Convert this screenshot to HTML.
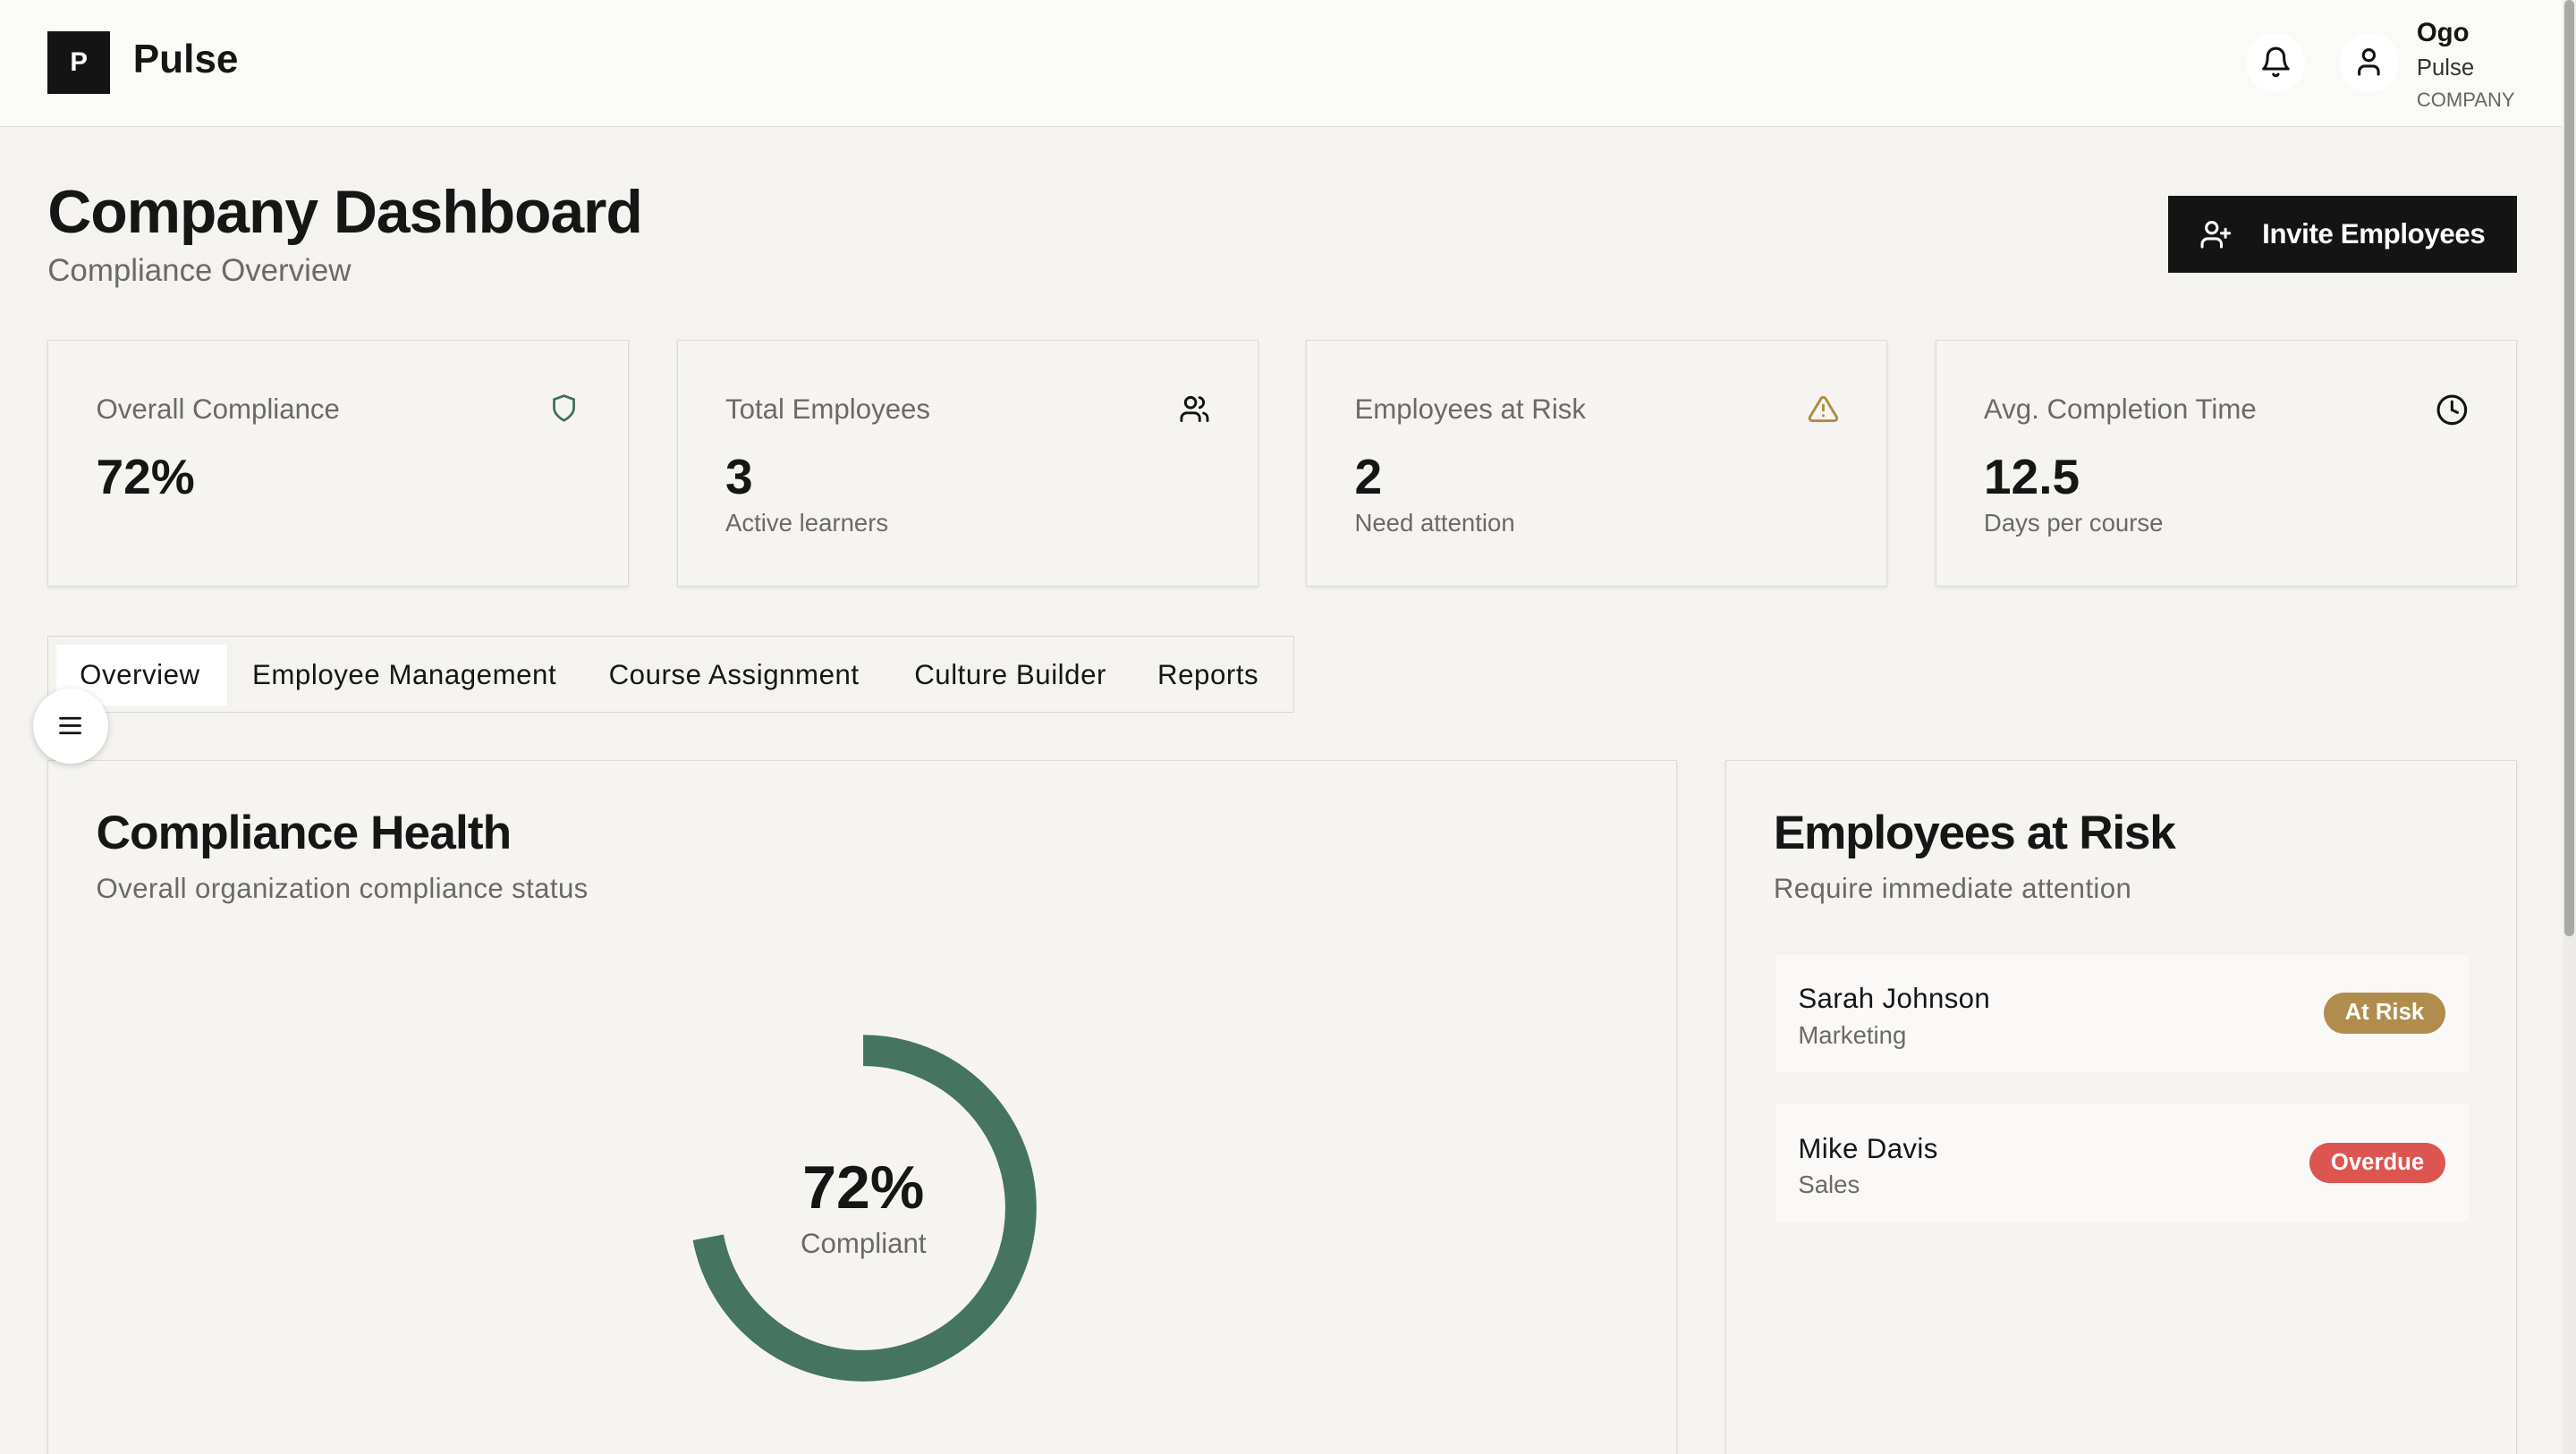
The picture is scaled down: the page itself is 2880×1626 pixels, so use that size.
<!DOCTYPE html>
<html><head><meta charset="utf-8"><style>
html,body{margin:0;padding:0;background:#f4f3ef;overflow:hidden}
#w{width:1568px;height:885px;zoom:1.836735;position:relative;font-family:"Liberation Sans",sans-serif;color:#161616;background:#f4f3ef;overflow:hidden}
.a{position:absolute}
.hdr{left:0;top:0;width:1560px;height:77px;background:#fafaf7;border-bottom:1px solid #e0e0db}
.card{background:#f5f4f0;border:1px solid #dcdbd6;box-shadow:0 1px 2px rgba(0,0,0,.08);box-sizing:border-box}
.lbl{font-size:17px;color:#6b6a66}
.val{font-size:30px;font-weight:bold}
.sub{font-size:15px;color:#6b6a66}
.tab{position:absolute;top:5px;height:37px;line-height:37px;font-size:17px;padding:0 14px;letter-spacing:0.3px}
.item{background:#faf9f7;left:30px;width:422px;height:71px}
.badge{position:absolute;right:14px;top:23px;height:25px;line-height:25px;border-radius:13px;color:#fff;font-weight:bold;font-size:14px;padding:0 13px}
</style></head><body><div id="w">
<div class="a hdr">
 <div class="a" style="left:29px;top:19px;width:38px;height:38px;background:#141414;color:#fff;font-weight:bold;font-size:16px;text-align:center;line-height:38px">P</div>
 <div class="a" style="left:81px;top:23px;font-size:24px;font-weight:bold">Pulse</div>
 <div class="a" style="left:1367px;top:20px;width:36px;height:36px;border-radius:50%;background:#fff"></div>
 <svg class="a" style="left:1375px;top:28px" width="20" height="20" viewBox="0 0 24 24" fill="none" stroke="#111" stroke-width="2" stroke-linecap="round" stroke-linejoin="round"><path d="M6 8a6 6 0 0 1 12 0c0 7 3 9 3 9H3s3-2 3-9"/><path d="M10.3 21a1.94 1.94 0 0 0 3.4 0"/></svg>
 <div class="a" style="left:1424px;top:20px;width:36px;height:36px;border-radius:50%;background:#fff"></div>
 <svg class="a" style="left:1432px;top:28px" width="20" height="20" viewBox="0 0 24 24" fill="none" stroke="#111" stroke-width="2" stroke-linecap="round"><circle cx="12" cy="7" r="4"/><path d="M19 21v-2a4 4 0 0 0-4-4H9a4 4 0 0 0-4 4v2"/></svg>
 <div class="a" style="left:1471px;top:11px;font-size:16px;font-weight:bold">Ogo</div>
 <div class="a" style="left:1471px;top:34px;font-size:14px;color:#333">Pulse</div>
 <div class="a" style="left:1471px;top:54px;font-size:12px;color:#666">COMPANY</div>
</div>
<div class="a" style="left:1560px;top:0;width:8px;height:885px;background:#ecebe7"></div>
<div class="a" style="left:1561px;top:0;width:6px;height:570px;background:#a8a8a6;border-radius:3px"></div>

<div class="a" style="left:29px;top:108px;font-size:37px;font-weight:bold;letter-spacing:-0.6px">Company Dashboard</div>
<div class="a" style="left:29px;top:154px;font-size:19px;color:#6b6a66">Compliance Overview</div>
<div class="a" style="left:1320px;top:119px;width:212px;height:47px;background:#141414;color:#fff;font-size:17px;font-weight:bold;line-height:47px">
 <svg class="a" style="left:19px;top:14px" width="20" height="20" viewBox="0 0 24 24" fill="none" stroke="#fff" stroke-width="2" stroke-linecap="round"><circle cx="9" cy="7" r="4"/><path d="M16 21v-2a4 4 0 0 0-4-4H6a4 4 0 0 0-4 4v2M19 8v6M22 11h-6"/></svg>
 <span class="a" style="left:57px;letter-spacing:-0.2px">Invite Employees</span></div>

<div class="a card" style="left:29px;top:207px;width:354px;height:150px">
 <div class="a lbl" style="left:29px;top:32px">Overall Compliance</div>
 <svg class="a" style="left:305px;top:31px" width="18" height="20" viewBox="0 0 24 24" fill="none" stroke="#3f7058" stroke-width="2"><path d="M12 22s8-4 8-10V5l-8-3-8 3v7c0 6 8 10 8 10z"/></svg>
 <div class="a val" style="left:29px;top:65px">72%</div></div>
<div class="a card" style="left:412px;top:207px;width:354px;height:150px">
 <div class="a lbl" style="left:29px;top:32px">Total Employees</div>
 <svg class="a" style="left:305px;top:32px" width="19" height="19" viewBox="0 0 24 24" fill="none" stroke="#111" stroke-width="2" stroke-linecap="round"><circle cx="9" cy="7" r="4"/><path d="M16 21v-2a4 4 0 0 0-4-4H6a4 4 0 0 0-4 4v2M22 21v-2a4 4 0 0 0-3-3.87M16 3.13a4 4 0 0 1 0 7.75"/></svg>
 <div class="a val" style="left:29px;top:65px">3</div><div class="a sub" style="left:29px;top:102px">Active learners</div></div>
<div class="a card" style="left:795px;top:207px;width:354px;height:150px">
 <div class="a lbl" style="left:29px;top:32px">Employees at Risk</div>
 <svg class="a" style="left:305px;top:32px" width="19" height="19" viewBox="0 0 24 24" fill="none" stroke="#b08a45" stroke-width="2" stroke-linecap="round" stroke-linejoin="round"><path d="M10.3 3.9 1.8 18a2 2 0 0 0 1.7 3h17a2 2 0 0 0 1.7-3L13.7 3.9a2 2 0 0 0-3.4 0zM12 9v4M12 17h.01"/></svg>
 <div class="a val" style="left:29px;top:65px">2</div><div class="a sub" style="left:29px;top:102px">Need attention</div></div>
<div class="a card" style="left:1178px;top:207px;width:354px;height:150px">
 <div class="a lbl" style="left:29px;top:32px">Avg. Completion Time</div>
 <svg class="a" style="left:304px;top:32px" width="20" height="20" viewBox="0 0 24 24" fill="none" stroke="#111" stroke-width="2" stroke-linecap="round"><circle cx="12" cy="12" r="10"/><path d="M12 6v6l4 2"/></svg>
 <div class="a val" style="left:29px;top:65px">12.5</div><div class="a sub" style="left:29px;top:102px">Days per course</div></div>

<div class="a" style="left:29px;top:387px;width:759px;height:47px;border:1px solid #d8d7d2;box-sizing:border-box;background:#f4f3ef">
 <div class="tab" style="left:5px;width:76px;background:#fff">Overview</div>
 <div class="tab" style="left:110px">Employee Management</div>
 <div class="tab" style="left:327px">Course Assignment</div>
 <div class="tab" style="left:513px">Culture Builder</div>
 <div class="tab" style="left:661px">Reports</div>
</div>

<div class="a card" style="left:29px;top:463px;width:992px;height:430px">
 <div class="a" style="left:29px;top:27px;font-size:29px;font-weight:bold;letter-spacing:-0.5px">Compliance Health</div>
 <div class="a" style="left:29px;top:68px;font-size:17px;color:#6b6a66;letter-spacing:0.2px">Overall organization compliance status</div>
 <svg class="a" style="left:386px;top:162px" width="220" height="220" viewBox="0 0 220 220"><circle cx="110" cy="110" r="96" fill="none" stroke="#457460" stroke-width="19" stroke-dasharray="434.3 1000" transform="rotate(-90 110 110)"/></svg>
 <div class="a" style="left:396px;top:238px;width:200px;text-align:center;font-size:37px;font-weight:bold">72%</div>
 <div class="a" style="left:396px;top:284px;width:200px;text-align:center;font-size:17px;color:#6b6a66">Compliant</div>
</div>
<div class="a card" style="left:1050px;top:463px;width:482px;height:430px">
 <div class="a" style="left:29px;top:27px;font-size:29px;font-weight:bold;letter-spacing:-0.7px">Employees at Risk</div>
 <div class="a" style="left:29px;top:68px;font-size:17px;color:#6b6a66;letter-spacing:0.2px">Require immediate attention</div>
 <div class="a item" style="top:118px"><div class="a" style="left:14px;top:17px;font-size:17px;letter-spacing:0.2px">Sarah Johnson</div><div class="a" style="left:14px;top:40px;font-size:15px;color:#6b6a66">Marketing</div><div class="badge" style="background:#b08d4c">At Risk</div></div>
 <div class="a item" style="top:209px"><div class="a" style="left:14px;top:17px;font-size:17px;letter-spacing:0.2px">Mike Davis</div><div class="a" style="left:14px;top:40px;font-size:15px;color:#6b6a66">Sales</div><div class="badge" style="background:#dd5550">Overdue</div></div>
</div>

<div class="a" style="left:20px;top:419px;width:46px;height:46px;border-radius:50%;background:#fff;box-shadow:0 1px 4px rgba(0,0,0,.2)">
 <svg class="a" style="left:14px;top:14px" width="18" height="18" viewBox="0 0 24 24" fill="none" stroke="#111" stroke-width="2" stroke-linecap="round"><path d="M4 6h16M4 12h16M4 18h16"/></svg></div>
</div></body></html>
